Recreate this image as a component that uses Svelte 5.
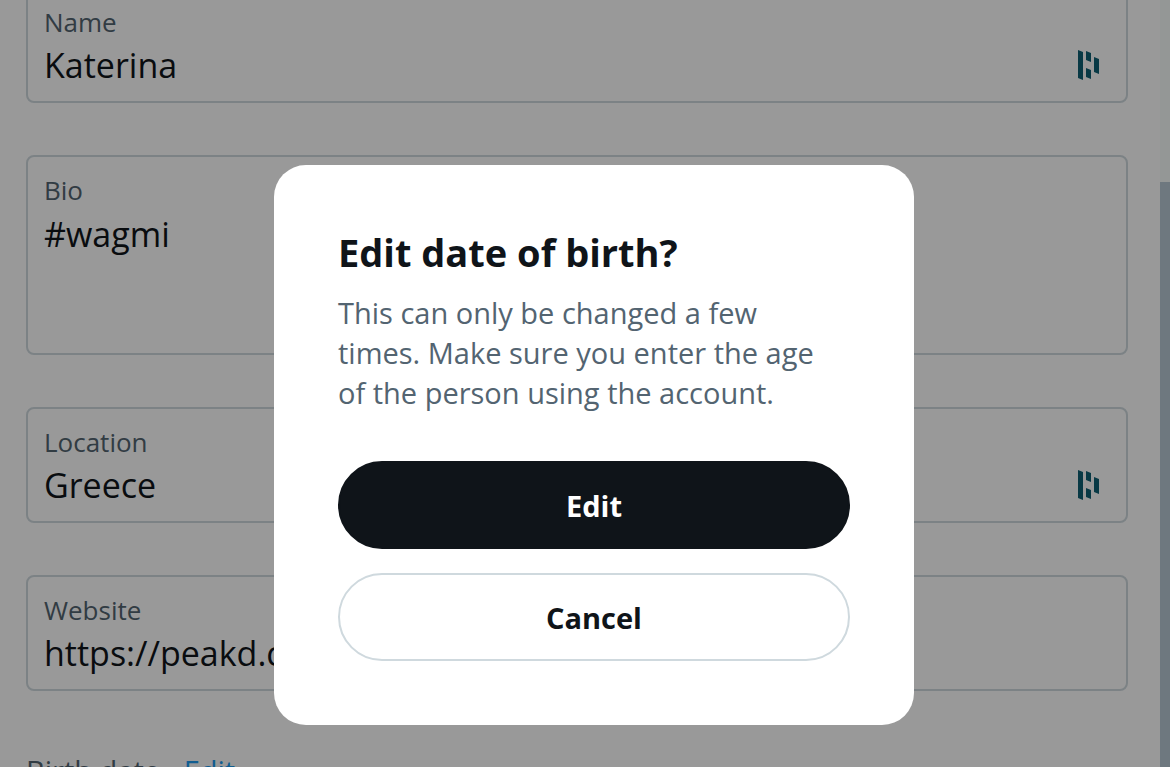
<script lang="ts">
	const fields = [
		{ id: 'name', label: 'Name', value: 'Katerina', fill: true },
		{ id: 'bio', label: 'Bio', value: '#wagmi', multiline: true },
		{ id: 'location', label: 'Location', value: 'Greece', fill: true },
		{ id: 'website', label: 'Website', value: 'https://peakd.com' }
	];
</script>

<svelte:head>
	<title>Edit profile</title>
</svelte:head>

<div class="page">
	<form class="profile" onsubmit={(e) => e.preventDefault()}>
		{#each fields as field}
			<div class="field">
				<div class="field-body">
					<label for={field.id}>{field.label}</label>
					{#if field.multiline}
						<textarea id={field.id} rows="3" value={field.value}></textarea>
					{:else}
						<input id={field.id} type="text" value={field.value} />
					{/if}
				</div>
				{#if field.fill}
					<svg class="fill-icon" viewBox="0 0 22 30" aria-hidden="true">
						<path d="M0 0 5 2V30L0 28Z" />
						<path d="M8 1 13 3V12L8 10Z" />
						<path d="M8 18 13 20V29L8 27Z" />
						<path d="M16 7 21 9V24L16 22Z" />
					</svg>
				{/if}
			</div>
		{/each}
		<div class="birth">
			<span>Birth date</span>
			<span>·</span>
			<a href="#birth">Edit</a>
		</div>
	</form>
	<div class="scrollbar"><div class="thumb"></div></div>
</div>

<div class="overlay">
	<div class="dialog" role="alertdialog" aria-modal="true" aria-labelledby="dialog-title">
		<h1 id="dialog-title">Edit date of birth?</h1>
		<p>
			This can only be changed a few times. Make sure you enter the age of the person using the
			account.
		</p>
		<div class="actions">
			<button type="button" class="primary">Edit</button>
			<button type="button">Cancel</button>
		</div>
	</div>
</div>

<style>
	:global(body) {
		margin: 0;
		background: #fff;
		font-family: 'Open Sans', 'Noto Sans', sans-serif;
		color: #0f1419;
	}

	.page {
		display: flex;
		height: 100vh;
		overflow: hidden;
	}

	/* The form is scrolled a little past its first border */
	.profile {
		flex: 1;
		display: flex;
		flex-direction: column;
		gap: 52px;
		margin-top: -13px;
		padding: 0 32px 0 26px;
	}

	.field {
		display: flex;
		flex-shrink: 0;
		align-items: flex-end;
		border: 2px solid #cfd9de;
		border-radius: 8px;
		padding: 16px 16px 12px;
	}

	.field-body {
		flex: 1;
		display: flex;
		flex-direction: column;
		gap: 2px;
	}

	label {
		font-size: 26px;
		line-height: 34px;
		color: #536471;
	}

	input,
	textarea {
		display: block;
		width: 100%;
		box-sizing: border-box;
		margin: 0;
		border: 0;
		padding: 0;
		background: transparent;
		font-family: inherit;
		font-size: 34px;
		line-height: 48px;
		color: #0f1419;
		outline: none;
		resize: none;
	}

	input {
		height: 48px;
	}

	textarea {
		height: 132px;
		line-height: 50px;
	}

	.fill-icon {
		flex-shrink: 0;
		width: 22px;
		height: 30px;
		margin: 0 10px 9px;
		fill: #0e5f73;
	}

	.birth {
		display: flex;
		gap: 8px;
		font-size: 29px;
		line-height: 56px;
		color: #536471;
	}

	.birth a {
		color: #1d9bf0;
		text-decoration: none;
	}

	.scrollbar {
		width: 10px;
		padding-top: 182px;
		box-sizing: border-box;
		background: #f7fcfa;
	}

	.thumb {
		height: 100%;
		background: #b8c8d4;
	}

	.overlay {
		position: fixed;
		inset: 0;
		display: flex;
		align-items: flex-start;
		justify-content: center;
		padding: 165px 0 0 18px;
		background: rgba(0, 0, 0, 0.4);
	}

	.dialog {
		width: 640px;
		box-sizing: border-box;
		padding: 64px;
		border-radius: 32px;
		background: #fff;
	}

	h1 {
		margin: 0 0 18px;
		font-size: 38px;
		font-weight: 700;
		line-height: 46px;
	}

	p {
		margin: 0;
		padding-right: 16px;
		font-size: 29px;
		line-height: 40px;
		color: #536471;
	}

	.actions {
		display: flex;
		flex-direction: column;
		gap: 24px;
		margin-top: 48px;
	}

	button {
		height: 88px;
		border: 2px solid #cfd9de;
		border-radius: 44px;
		padding: 0 32px;
		background: #fff;
		font-family: inherit;
		font-size: 29px;
		font-weight: 700;
		color: #0f1419;
		cursor: pointer;
	}

	.primary {
		border-color: #0f1419;
		background: #0f1419;
		color: #fff;
	}
</style>
